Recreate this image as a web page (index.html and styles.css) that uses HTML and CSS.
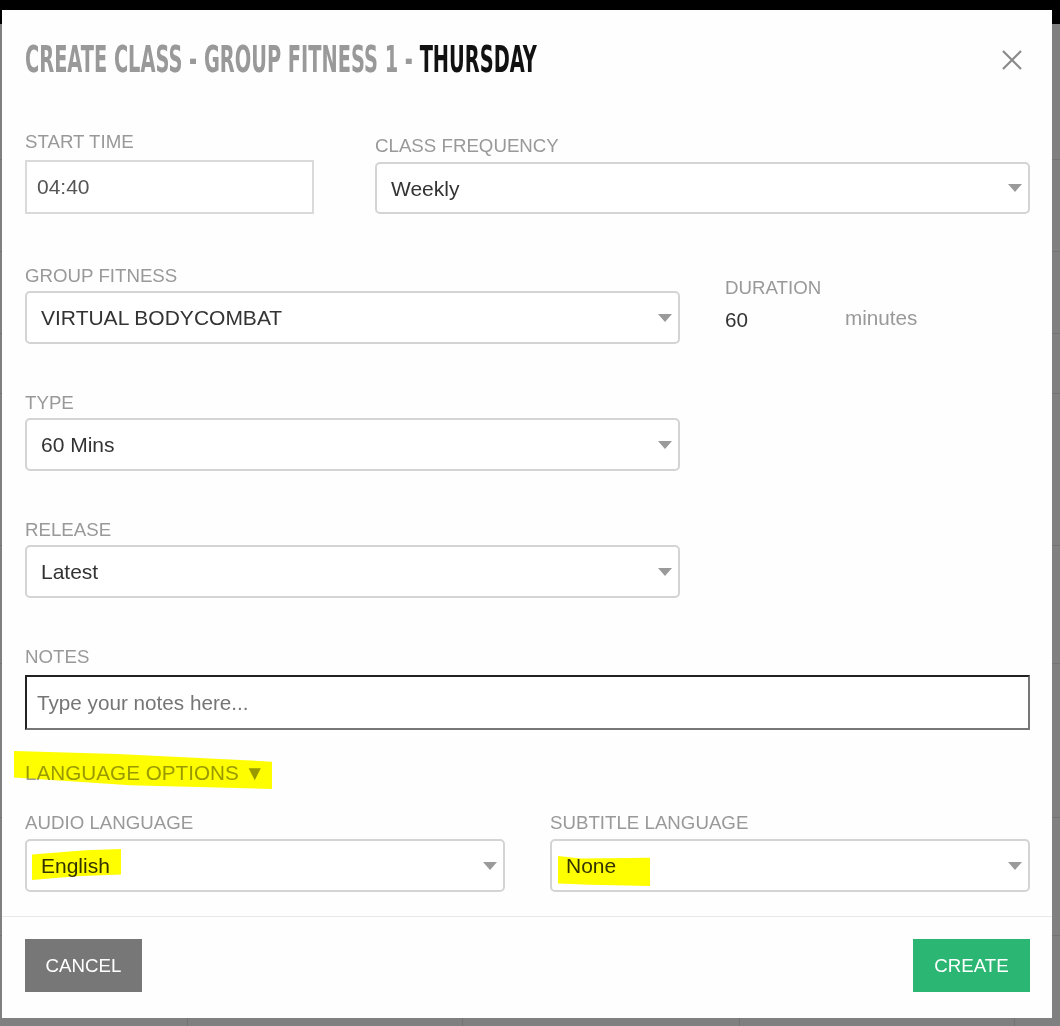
FILE: index.html
```html
<!DOCTYPE html>
<html>
<head>
    <meta charset="utf-8">
    <meta name="viewport" content="width=device-width, initial-scale=1.0">
    <title>Create Class</title>
    <link rel="stylesheet" href="styles.css">
</head>
<body>
    <div class="page">
        <div class="topbar"></div>
        <div class="calendar">
            <div class="cal-row r1"></div>
            <div class="cal-row r2"></div>
            <div class="cal-row r3"></div>
            <div class="cal-row r4"></div>
            <div class="cal-row r5"></div>
            <div class="cal-row r6"></div>
            <div class="cal-row r7"></div>
            <div class="cal-row r8"></div>
            <div class="cal-row r9"></div>
        </div>
    </div>

    <div class="modal">
        <div class="modal-header">
            <h1 class="modal-title"><span class="title-text">Create Class - Group Fitness 1 - <b>Thursday</b></span></h1>
            <button class="close" type="button" aria-label="Close">
                <svg width="20" height="20" viewBox="0 0 20 20">
                    <path d="M1 1 L19 19 M19 1 L1 19" stroke="#8a8a8a" stroke-width="2.2" fill="none"/>
                </svg>
            </button>
        </div>

        <form class="modal-body">
            <div class="row row-top">
                <div class="field field-time">
                    <label class="gap-lg">Start Time</label>
                    <input class="text-input" type="text" value="04:40">
                </div>
                <div class="field field-freq">
                    <label class="gap-md">Class Frequency</label>
                    <div class="select">
                        <select><option>Weekly</option></select>
                    </div>
                </div>
            </div>

            <div class="row row-split">
                <div class="field field-main">
                    <label>Group Fitness</label>
                    <div class="select">
                        <select><option>VIRTUAL BODYCOMBAT</option></select>
                    </div>
                </div>
                <div class="field field-duration">
                    <label>Duration</label>
                    <div class="duration-value">
                        <input class="plain-input" type="text" value="60">
                        <span class="unit">minutes</span>
                    </div>
                </div>
            </div>

            <div class="row row-split">
                <div class="field field-main">
                    <label>Type</label>
                    <div class="select">
                        <select><option>60 Mins</option></select>
                    </div>
                </div>
            </div>

            <div class="row row-split">
                <div class="field field-main">
                    <label>Release</label>
                    <div class="select">
                        <select><option>Latest</option></select>
                    </div>
                </div>
            </div>

            <div class="row row-notes">
                <div class="field">
                    <label class="gap-lg">Notes</label>
                    <input class="notes-input" type="text" placeholder="Type your notes here...">
                </div>
            </div>

            <div class="lang-toggle">
                <span class="lang-text">Language Options &#9660;<span class="marker marker-toggle"></span></span>
            </div>

            <div class="row row-lang">
                <div class="field">
                    <label class="gap-md">Audio Language</label>
                    <div class="select">
                        <select><option>English</option></select>
                        <span class="marker marker-english"></span>
                    </div>
                </div>
                <div class="field">
                    <label class="gap-md">Subtitle Language</label>
                    <div class="select">
                        <select><option>None</option></select>
                        <span class="marker marker-none"></span>
                    </div>
                </div>
            </div>
        </form>

        <div class="modal-footer">
            <button class="btn btn-cancel" type="button">Cancel</button>
            <button class="btn btn-create" type="button">Create</button>
        </div>
    </div>
</body>
</html>
```

FILE: styles.css
```css
* {
    box-sizing: border-box;
    margin: 0;
    padding: 0;
}
body {
    font-family: "Liberation Sans", Arial, sans-serif;
    background: #808080;
    width: 1060px;
    height: 1026px;
    overflow: hidden;
    position: relative;
}

/* dimmed page behind the dialog */
.topbar {
    height: 24px;
    background: #000;
}
.calendar {
    background-image: linear-gradient(to right,
        transparent 187px, #737373 187px, #737373 188px, transparent 188px,
        transparent 462px, #737373 462px, #737373 463px, transparent 463px,
        transparent 739px, #737373 739px, #737373 740px, transparent 740px,
        transparent 1014px, #737373 1014px, #737373 1015px, transparent 1015px);
}
.cal-row {
    border-bottom: 1px solid #737373;
}
.r1 { height: 136px; }
.r2 { height: 92px; }
.r3 { height: 82px; }
.r4 { height: 60px; }
.r5 { height: 152px; }
.r6 { height: 118px; }
.r7 { height: 154px; }
.r8 { height: 118px; }
.r9 { height: 90px; border-bottom: none; }

/* dialog */
.modal {
    position: absolute;
    top: 10px;
    left: 2px;
    width: 1050px;
    background: #fefefe;
}
.modal-header {
    display: flex;
    align-items: center;
    justify-content: space-between;
    padding: 31px 22px 0 23px;
}
.modal-title {
    font-family: "DejaVu Sans Condensed", "DejaVu Sans", sans-serif;
    font-stretch: condensed;
    font-size: 37px;
    line-height: 37px;
    font-weight: bold;
    color: #999;
    text-transform: uppercase;
    white-space: nowrap;
    flex: 1;
    min-width: 0;
}
.title-text {
    display: inline-block;
    transform: scaleX(0.582);
    transform-origin: 0 50%;
}
.modal-title b {
    color: #111;
}
.close {
    width: 20px;
    height: 20px;
    margin-right: 8px;
    border: none;
    background: none;
    cursor: pointer;
}
.close svg {
    display: block;
}

.modal-body {
    padding: 54px 22px 24px 23px;
    border-bottom: 1px solid #e9e9e9;
}
.row {
    display: flex;
}
.row-top {
    align-items: flex-end;
    gap: 61px;
}
.row-split {
    gap: 45px;
    margin-top: 52px;
}
.row-split + .row-split {
    margin-top: 49px;
}
.row-notes {
    margin-top: 49px;
}
.row-notes .field {
    flex: 1;
}
.field label {
    display: block;
    font-size: 18.7px;
    line-height: 20px;
    color: #999;
    text-transform: uppercase;
    margin-bottom: 5px;
}
.field label.gap-lg {
    margin-bottom: 8px;
}
.field label.gap-md {
    margin-bottom: 6px;
}
.field-time {
    width: 289px;
}
.field-freq {
    flex: 1;
}
.field-main {
    width: 655px;
}
.field-duration {
    padding-top: 12px;
}

.text-input {
    width: 100%;
    height: 54px;
    border: 2px solid #dadada;
    padding: 0 10px;
    font-family: inherit;
    font-size: 21px;
    color: #555;
    background: #fff;
}
.notes-input {
    width: 100%;
    height: 55px;
    border: 2px solid;
    border-color: #222 #777 #777 #222;
    padding: 0 10px;
    font-family: inherit;
    font-size: 20.7px;
    color: #333;
    background: #fff;
}
.notes-input::placeholder {
    color: #757575;
}

.select {
    position: relative;
}
.select select {
    appearance: none;
    -webkit-appearance: none;
    display: block;
    width: 100%;
    height: 53px;
    border: 2px solid #d4d4d4;
    border-radius: 5px;
    padding: 0 32px 0 14px;
    font-family: inherit;
    font-size: 21px;
    color: #333;
    background: #fff;
}
.field-freq .select select {
    height: 52px;
}
.select::after {
    content: '';
    position: absolute;
    right: 8px;
    top: 50%;
    margin-top: -4px;
    border-left: 7px solid transparent;
    border-right: 7px solid transparent;
    border-top: 8px solid #9a9a9a;
    pointer-events: none;
}

.duration-value {
    display: flex;
    margin-top: 10px;
    height: 24px;
}
.plain-input {
    width: 120px;
    border: none;
    padding: 0;
    font-family: inherit;
    font-size: 20.7px;
    line-height: 24px;
    height: 24px;
    color: #333;
    background: transparent;
}
.unit {
    font-size: 20.7px;
    line-height: 24px;
    color: #999;
    margin-top: -2px;
}

.lang-toggle {
    margin-top: 31px;
    font-size: 20.7px;
    line-height: 24px;
    color: #999;
    text-transform: uppercase;
}
.lang-text {
    position: relative;
    display: inline-block;
}

.row-lang {
    display: grid;
    grid-template-columns: 1fr 1fr;
    gap: 45px;
    margin-top: 28px;
}

/* hand-drawn highlighter on the screenshot */
.marker {
    position: absolute;
    background: #ffff00;
    mix-blend-mode: multiply;
    pointer-events: none;
}
.marker-toggle {
    left: -11px;
    top: -10px;
    width: 258px;
    height: 38px;
    clip-path: polygon(0 0, 40% 8%, 100% 28%, 100% 100%, 45% 90%, 0 70%);
}
.marker-english {
    left: 7px;
    top: 10px;
    width: 89px;
    height: 31px;
    clip-path: polygon(0 18%, 60% 4%, 100% 0, 100% 82%, 50% 88%, 0 100%);
}
.marker-none {
    left: 8px;
    top: 17px;
    width: 92px;
    height: 30px;
    clip-path: polygon(0 0, 25% 8%, 100% 6%, 100% 100%, 35% 96%, 0 92%);
}

.modal-footer {
    display: flex;
    justify-content: space-between;
    padding: 22px 22px 26px 23px;
}
.btn {
    min-width: 117px;
    height: 53px;
    padding: 0 20px;
    border: none;
    font-family: inherit;
    font-size: 18.7px;
    color: #fff;
    text-transform: uppercase;
    cursor: pointer;
}
.btn-cancel {
    background: #777;
}
.btn-create {
    background: #2bb673;
}
```
